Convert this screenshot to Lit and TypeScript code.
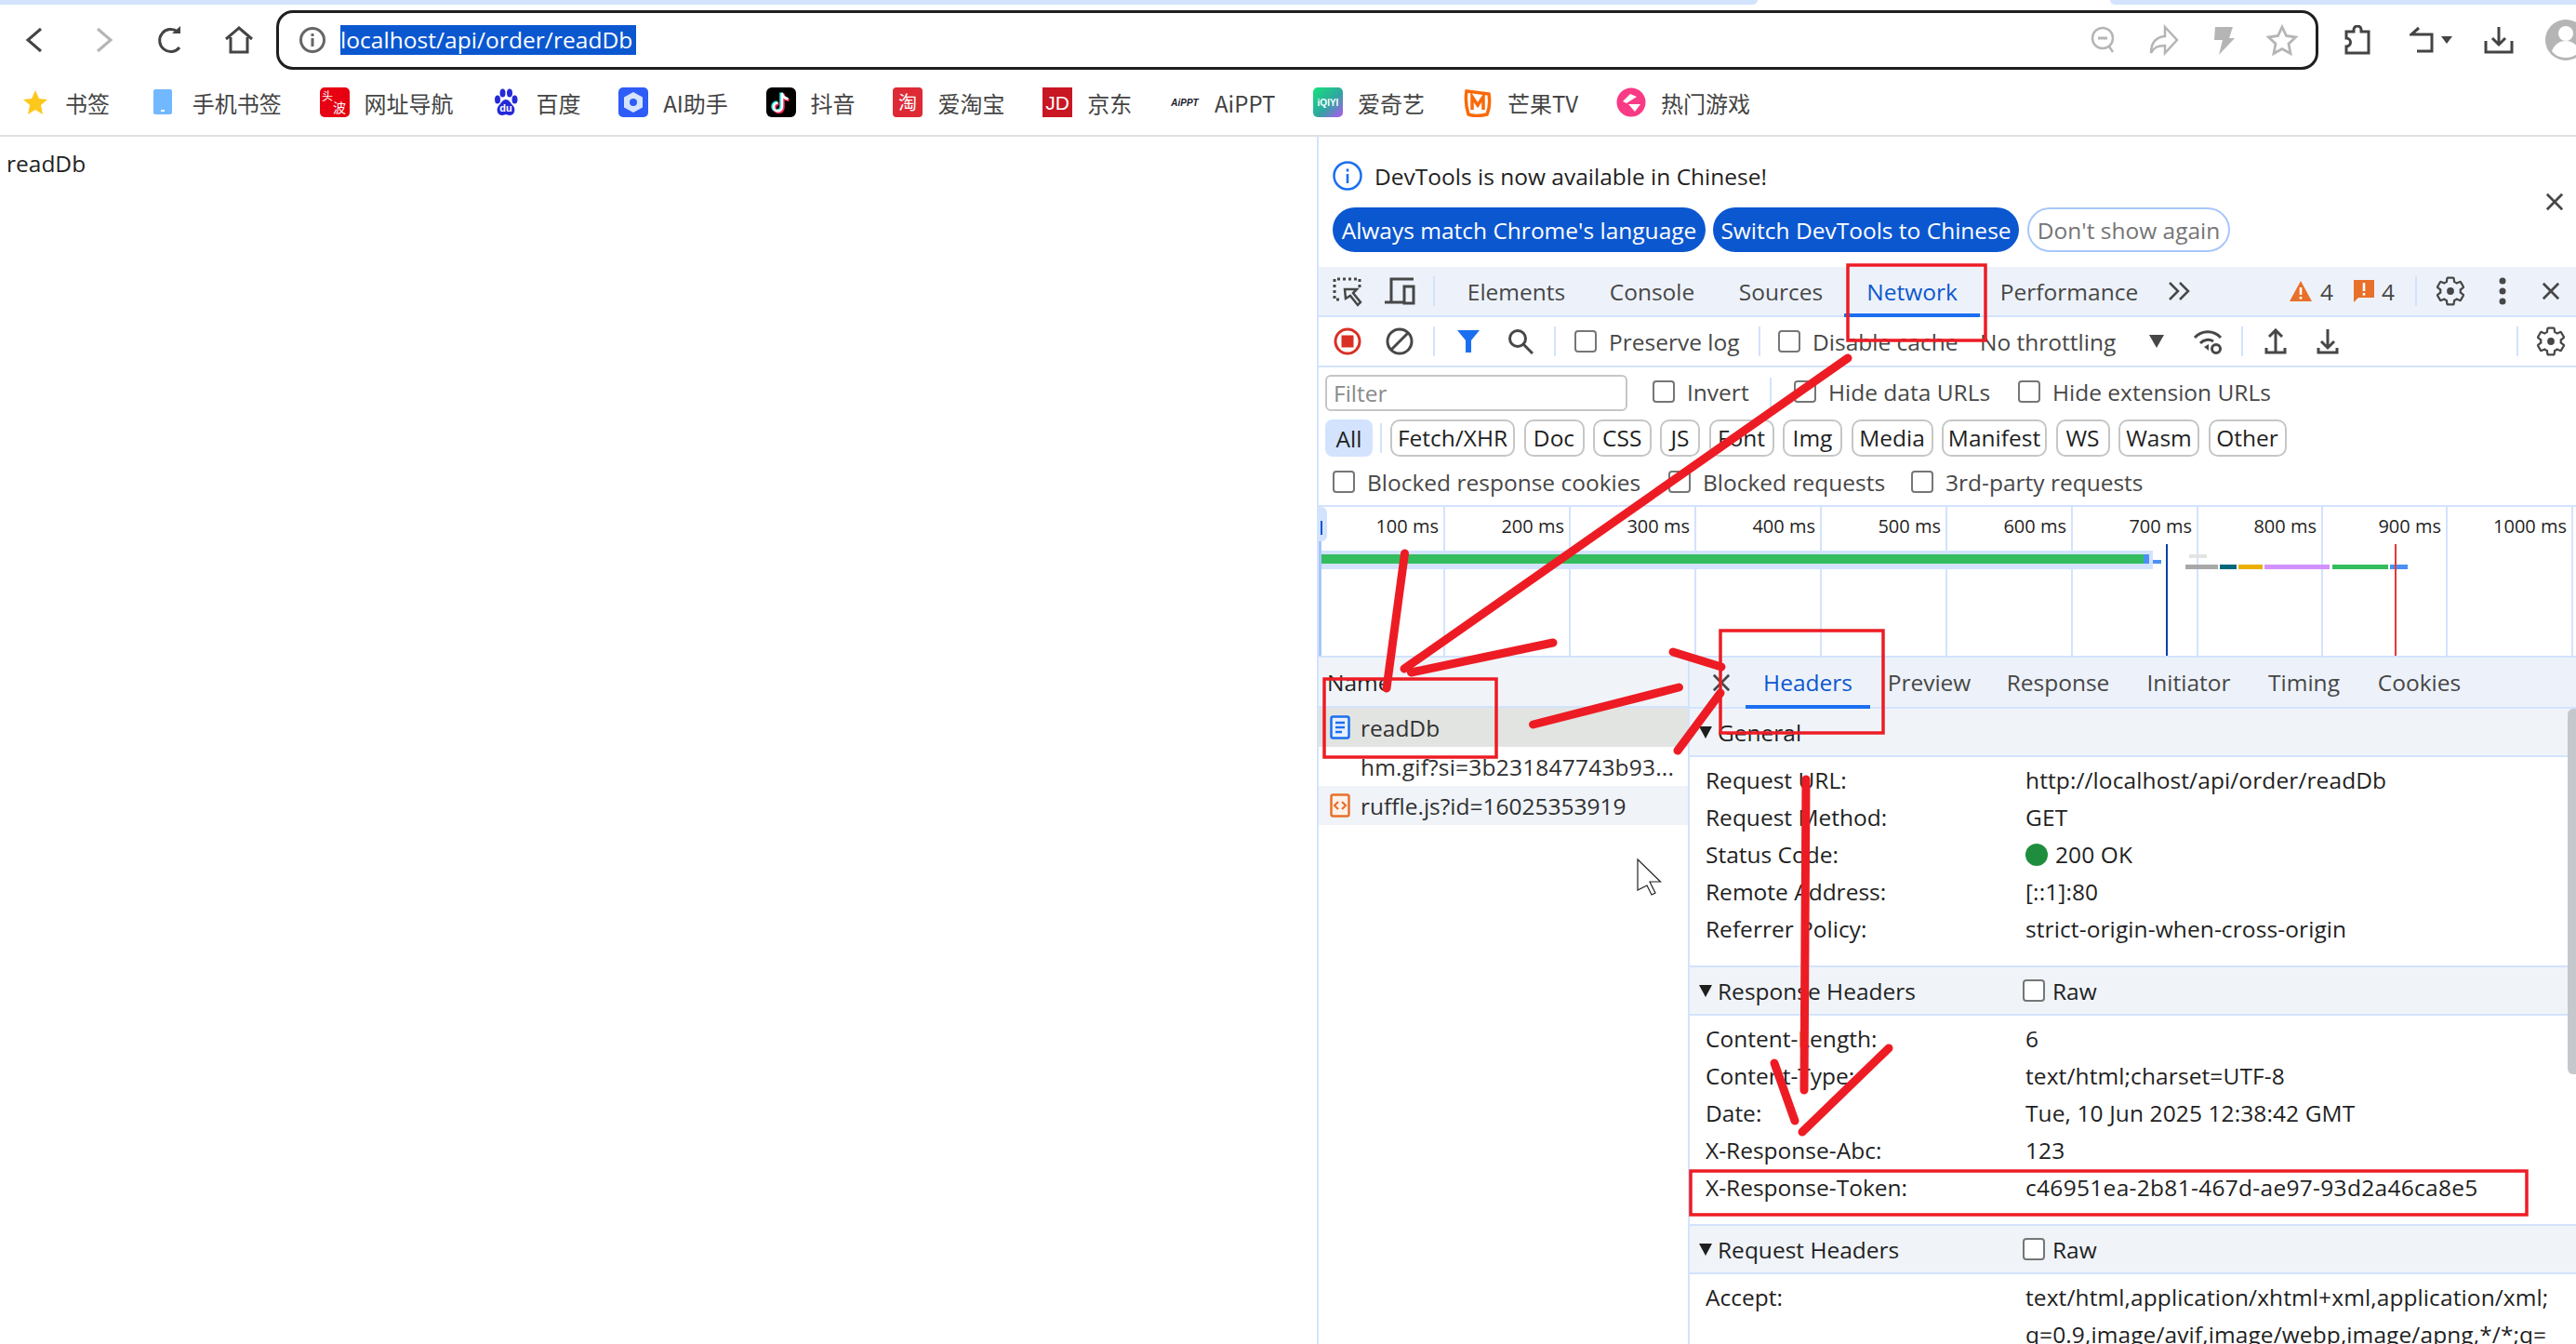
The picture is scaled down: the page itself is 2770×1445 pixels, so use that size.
import { LitElement, html, css } from "lit";
import { customElement } from "lit/decorators.js";

const GEAR_D = "M19.14 12.94c.04-.3.06-.61.06-.94 0-.32-.02-.64-.07-.94l2.03-1.58c.18-.14.23-.41.12-.61l-1.92-3.32c-.12-.22-.37-.29-.59-.22l-2.39.96c-.5-.38-1.03-.7-1.62-.94l-.36-2.54c-.04-.24-.24-.41-.48-.41h-3.84c-.24 0-.43.17-.47.41l-.36 2.54c-.59.24-1.13.57-1.62.94l-2.39-.96c-.22-.08-.47 0-.59.22L2.74 8.87c-.12.21-.08.47.12.61l2.03 1.58c-.05.3-.09.63-.09.94s.02.64.07.94l-2.03 1.58c-.18.14-.23.41-.12.61l1.92 3.32c.12.22.37.29.59.22l2.39-.96c.5.38 1.03.7 1.62.94l.36 2.54c.05.24.24.41.48.41h3.84c.24 0 .44-.17.47-.41l.36-2.54c.59-.24 1.13-.56 1.62-.94l2.39.96c.22.08.47 0 .59-.22l1.92-3.32c.12-.22.07-.47-.12-.61l-2.01-1.58z";

const gear = html`<svg class="i36" viewBox="0 0 24 24"><path d=${GEAR_D} fill="none" stroke="#474747" stroke-width="1.5"/><circle cx="12" cy="12" r="2.6" fill="#474747"/></svg>`;
const closeX = html`<svg class="i22" viewBox="0 0 22 22"><path d="M2 2 20 20M20 2 2 20" stroke="#474747" stroke-width="3" fill="none"/></svg>`;
const chk = html`<span class="chk"></span>`;

const bookmarks = [
  { label: "书签", icon: html`<svg class="bi" viewBox="0 0 32 32"><path d="M16 3l4 9 9 1-7 6 2 10-8-5-8 5 2-10-7-6 9-1z" fill="#fdc81e"/></svg>` },
  { label: "手机书签", icon: html`<svg class="bi" viewBox="0 0 32 32"><rect x="6" y="2" width="20" height="27" rx="2" fill="#71b8ff"/><rect x="14" y="24" width="4" height="2" fill="#fff"/></svg>` },
  { label: "网址导航", icon: html`<svg class="bi" viewBox="0 0 32 32"><rect width="32" height="32" rx="5" fill="#e60012"/><text x="2" y="14" font-size="12" fill="#fff" font-family="Noto Sans CJK SC">头</text><text x="14" y="27" font-size="14" fill="#fff" font-family="Noto Sans CJK SC">波</text></svg>` },
  { label: "百度", icon: html`<svg class="bi" viewBox="0 0 32 32"><g fill="#2529d8"><ellipse cx="7" cy="13" rx="3" ry="4.5"/><ellipse cx="12.500" cy="6" rx="3" ry="4.500"/><ellipse cx="20" cy="6" rx="3" ry="4.500"/><ellipse cx="25.500" cy="13" rx="3" ry="4.500"/><path d="M16 13c4 0 5 4 8 7 3 4 1 10-4 10-2 0-3-1-4-1s-2 1-4 1c-5 0-7-6-4-10 3-3 4-7 8-7z"/></g><text x="16" y="26" font-size="11" font-weight="700" fill="#fff" text-anchor="middle" font-family="Liberation Sans">du</text></svg>` },
  { label: "AI助手", icon: html`<svg class="bi" viewBox="0 0 32 32"><rect width="32" height="32" rx="5" fill="#2d5cf6"/><path d="M16 5l10 5.500v11L16 27 6 21.500v-11z" fill="#d6e3fe"/><circle cx="16" cy="16" r="4" fill="#2d5cf6"/></svg>` },
  { label: "抖音", icon: html`<svg class="bi" viewBox="0 0 32 32"><rect width="32" height="32" rx="6" fill="#000"/><path d="M17 6v15a4.500 4.500 0 1 1-4.500-4.500M17 6c.5 3.500 3 6 6.500 6.500" fill="none" stroke="#25f4ee" stroke-width="3.500" transform="translate(-1 -.5)"/><path d="M17 6v15a4.500 4.500 0 1 1-4.500-4.500M17 6c.5 3.500 3 6 6.500 6.500" fill="none" stroke="#fe2c55" stroke-width="3.500" transform="translate(1 1)"/><path d="M17 6v15a4.500 4.500 0 1 1-4.500-4.500M17 6c.5 3.500 3 6 6.500 6.500" fill="none" stroke="#fff" stroke-width="2.500"/></svg>` },
  { label: "爱淘宝", icon: html`<svg class="bi" viewBox="0 0 32 32"><rect width="32" height="32" rx="4" fill="#dd2a35"/><text x="16" y="24" font-size="20" fill="#fff" text-anchor="middle" font-family="Noto Sans CJK SC">淘</text></svg>` },
  { label: "京东", icon: html`<svg class="bi" viewBox="0 0 32 32"><rect width="32" height="32" fill="#c91623"/><text x="16" y="24" font-size="21" fill="#fff" text-anchor="middle" font-family="Liberation Sans">JD</text></svg>` },
  { label: "AiPPT", icon: html`<svg class="bi" viewBox="0 0 32 32"><text x="16" y="20" font-size="10" font-style="italic" font-weight="700" fill="#1a1a2e" text-anchor="middle" font-family="Liberation Sans">AiPPT</text></svg>` },
  { label: "爱奇艺", icon: html`<svg class="bi" viewBox="0 0 32 32"><defs><linearGradient id="iq" x1="0" y1="0" x2="1" y2="1"><stop offset="0" stop-color="#16e27c"/><stop offset=".55" stop-color="#2fa6a0"/><stop offset="1" stop-color="#b455f5"/></linearGradient></defs><rect width="32" height="32" rx="5" fill="url(#iq)"/><text x="16" y="20" font-size="10" font-weight="700" fill="#fff" text-anchor="middle" font-family="Liberation Sans">iQIYI</text></svg>` },
  { label: "芒果TV", icon: html`<svg class="bi" viewBox="0 0 32 32"><path d="M4 4 L28 7 Q30 20 26 29 Q14 32 6 29 Q2 16 4 4z" fill="none" stroke="#f96a0a" stroke-width="3.500"/><path d="M10 24V10l6 9 6-9v14" fill="none" stroke="#f96a0a" stroke-width="3.500"/></svg>` },
  { label: "热门游戏", icon: html`<svg class="bi" viewBox="0 0 32 32"><circle cx="16" cy="16" r="15.500" fill="#f93a85"/><path d="M15 7l7 3-11 7-4-2z" fill="#fff"/><path d="M13 18h13l-6 8z" fill="#fff"/></svg>` },
];

const tabs = [
  { t: "Elements", w: 151 },
  { t: "Console", w: 141 },
  { t: "Sources", w: 136 },
  { t: "Network", w: 146, on: true },
  { t: "Performance", w: 192 },
];
const chips = [
  { t: "Fetch/XHR", w: 134 }, { t: "Doc", w: 65 }, { t: "CSS", w: 62.5 }, { t: "JS", w: 43 },
  { t: "Font", w: 70 }, { t: "Img", w: 64 }, { t: "Media", w: 88 }, { t: "Manifest", w: 113 },
  { t: "WS", w: 58 }, { t: "Wasm", w: 87 }, { t: "Other", w: 84 },
];
const detailTabs = [
  { t: "Headers", w: 134, on: true }, { t: "Preview", w: 127 }, { t: "Response", w: 150 },
  { t: "Initiator", w: 131 }, { t: "Timing", w: 117 }, { t: "Cookies", w: 131 },
];
const rulerLines = [1552, 1687, 1822, 1957, 2092, 2227, 2362, 2496, 2630, 2765];
const rulerLabels = ["100 ms", "200 ms", "300 ms", "400 ms", "500 ms", "600 ms", "700 ms", "800 ms", "900 ms", "1000 ms"];
const segs: [number, number, number, number, string][] = [
  [1420, 2315, 592, 612, "#d3e3fd"],
  [1420, 2305, 596, 606, "#34bd5e"],
  [2305, 2311, 596, 606, "#4a90f5"],
  [2315, 2324, 602, 606, "#4a90f5"],
  [2354, 2373, 596, 600, "#e3e3e3"],
  [2350, 2385, 607, 612, "#a8a8a8"],
  [2387, 2405, 607, 612, "#00687a"],
  [2407, 2433, 607, 612, "#e9b000"],
  [2435, 2505, 607, 612, "#d291ff"],
  [2508, 2568, 607, 612, "#34bd5e"],
  [2570, 2589, 607, 612, "#4a90f5"],
  [1418, 1421, 582, 705, "#a8c7fa"],
  [2329, 2331, 585, 705, "#0b3ea8"],
  [2575, 2577, 585, 705, "#e53935"],
];

const general = [
  ["Request URL:", "http://localhost/api/order/readDb"],
  ["Request Method:", "GET"],
  ["Status Code:", "200 OK"],
  ["Remote Address:", "[::1]:80"],
  ["Referrer Policy:", "strict-origin-when-cross-origin"],
];
const response = [
  ["Content-Length:", "6"],
  ["Content-Type:", "text/html;charset=UTF-8"],
  ["Date:", "Tue, 10 Jun 2025 12:38:42 GMT"],
  ["X-Response-Abc:", "123"],
  ["X-Response-Token:", "c46951ea-2b81-467d-ae97-93d2a46ca8e5"],
];

@customElement("app-root")
export class AppRoot extends LitElement {
  static styles = css`
    :host { display: block; width: 2770px; height: 1445px; position: relative; overflow: hidden; background: #fff;
      font-family: "Open Sans", "Noto Sans CJK SC", sans-serif; font-size: 24.5px; color: #1f1f1f; }
    * { box-sizing: border-box; }
    svg { display: block; flex: none; }
    .i36 { width: 36px; height: 36px; }
    .i22 { width: 20px; height: 20px; }
    .strip { display: flex; height: 5px; }
    .strip-a { width: 1890px; background: #d3e3fd; border-bottom-right-radius: 6px; }
    .strip-b { margin-left: auto; width: 501px; background: #d3e3fd; border-bottom-left-radius: 6px; }
    .toolbar { display: grid; grid-template-columns: 74px 76px 66px 81px 2196px 84px 73px 74px 70px; height: 75px; align-items: center; justify-items: center; }
    .addr { width: 100%; height: 64px; border: 3px solid #1f1f1f; border-radius: 18px; display: flex; align-items: center; padding: 0 18px 0 21px; }
    .sel { margin-left: 15px; background: #0b57d0; color: #fff; height: 32px; line-height: 32px; width: 318px; white-space: nowrap; letter-spacing: 0.05px; }
    .addr-right { margin-left: auto; display: flex; gap: 28px; }
    .addr-right svg { width: 36px; height: 36px; }
    .undo { display: flex; align-items: center; gap: 6px; }
    .bookmarks { height: 67px; display: flex; align-items: center; gap: 40.8px; padding: 0 0 5px 22px; border-bottom: 2px solid #e0e0e0; font-family: "Noto Sans CJK SC", sans-serif; font-size: 24px; color: #444; }
    .bm { display: flex; align-items: center; gap: 16px; white-space: nowrap; }
    .bi { width: 32px; height: 32px; }
    .main { display: flex; height: 1298px; }
    .page { width: 1416px; padding: 13px 0 0 7px; line-height: 32px; }
    .dev { width: 1354px; border-left: 2px solid #d3e3fd; display: flex; flex-direction: column; overflow: hidden; }
    .info { height: 140px; display: flex; align-items: center; justify-content: space-between; padding: 0 13px 0 15px; flex: none; }
    .info-l { display: flex; flex-direction: column; gap: 18px; margin-top: 10px; }
    .info-t { display: flex; align-items: center; gap: 13px; height: 32px; }
    .info-b { display: flex; gap: 8px; }
    .pill { height: 48px; border-radius: 24px; display: flex; align-items: center; justify-content: center; white-space: nowrap; background: #0b57d0; color: #fff; }
    .pill.w1 { width: 401px; } .pill.w2 { width: 329px; }
    .pill.w3 { width: 218px; background: #fff; border: 2px solid #a8c7fa; color: #757575; margin-left: 1px; }
    .bar { display: flex; align-items: center; flex: none; white-space: nowrap; }
    .main-tabs { height: 54px; background: #edf2fa; border-bottom: 2px solid #d3e3fd; padding: 0 3px 0 3px; color: #474747; }
    .ib { width: 56px; height: 100%; display: flex; align-items: center; justify-content: center; flex: none; }
    .ib.wide { width: 57px; }
    .ib.gearbox { width: 54px; }
    .ib.last { width: 48px; }
    .tabs-gap { width: 5px; flex: none; }
    .sep { width: 2px; height: 32px; background: #d3e3fd; flex: none; margin: 0 7px 0 8px; }
    .sep.tight { margin: 0 8px 0 0; }
    .sep.push { margin: 0 8px 0 auto; }
    .sep.row3-sep { margin: 0 0 0 24px; }
    .sep.row4-sep { margin: 0 9px 0 8px; }
    .tab { height: 100%; display: flex; align-items: center; justify-content: center; flex: none; position: relative; }
    .tab.on { color: #0b57d0; }
    .tab.on::after { content: ""; position: absolute; left: 0; right: 0; bottom: -2px; height: 4px; background: #1a6ff0; }
    .more { width: 44px; }
    .issues { margin-left: auto; display: flex; align-items: center; }
    .issue { display: flex; align-items: center; gap: 8px; margin-right: 22px; }
    .row2 { height: 54px; border-bottom: 2px solid #d3e3fd; padding-left: 3px; color: #474747; }
    .row3 { height: 54px; padding-left: 7px; color: #474747; }
    .row3 .lab span { position: relative; top: -1px; }
    .row4 { height: 44px; padding-left: 7px; }
    .row5 { height: 50px; padding-left: 15px; color: #474747; }
    .throttle { margin-left: 25px; width: 148px; flex: none; }
    .throttle-tri { margin-left: 33px; }
    .wifi { margin-left: 18px; }
    .chk { width: 24px; height: 24px; border: 2px solid #747775; border-radius: 4px; background: #fff; flex: none; }
    .lab { display: flex; align-items: center; gap: 13px; flex: none; white-space: nowrap; }
    .lab.raw { gap: 8px; }
    .filter { width: 325px; height: 39px; border: 2px solid #c4c7c5; border-radius: 6px; padding-left: 7px; color: #8a8a8a; display: flex; align-items: center; flex: none; }
    .all { width: 51px; height: 40px; border-radius: 8px; background: #d3e3fd; display: flex; align-items: center; justify-content: center; flex: none; }
    .chips { display: flex; gap: 9.5px; }
    .chip { height: 40px; border: 2px solid #c4c7c5; border-radius: 10px; display: flex; align-items: center; justify-content: center; flex: none; padding-bottom: 1px; }
    .timeline { height: 164px; flex: none; position: relative; border-top: 2px solid #d3e3fd; border-bottom: 2px solid #d3e3fd; }
    .vline { position: absolute; top: 0; bottom: 0; width: 2px; background: #d3e3fd; }
    .tlabel { position: absolute; top: 7px; width: 110px; text-align: right; font-size: 20px; line-height: 28px; white-space: nowrap; }
    .seg { position: absolute; }
    .handle { position: absolute; left: 0; top: 0; width: 9px; height: 37px; background: #d3e3fd; border-radius: 0 6px 6px 0; }
    .handle::after { content: ""; position: absolute; left: 2px; top: 15px; width: 2px; height: 15px; background: #0b57d0; }
    .lower { flex: 1; display: flex; min-height: 0; }
    .list { width: 399px; flex: none; border-right: 2px solid #d3e3fd; }
    .list-h { height: 54px; background: #f0f4f9; border-bottom: 2px solid #d3e3fd; padding: 0 0 0 9px; display: flex; align-items: center; }
    .req { height: 42px; display: flex; align-items: center; gap: 12px; padding-left: 12px; white-space: nowrap; color: #303030; }
    .req span { position: relative; left: -1px; }
    .req.sel-row { background: #e2e4e1; }
    .req.alt { background: #f0f4f9; }
    .req.noicon { padding-left: 46px; letter-spacing: 0.2px; }
    .ri { width: 22px; height: 26px; }
    .detail { flex: 1; min-width: 0; display: flex; flex-direction: column; position: relative; }
    .detail-tabs { height: 55px; flex: none; background: #edf2fa; border-bottom: 2px solid #d3e3fd; color: #474747; padding-left: 13px; }
    .dx { width: 47px; height: 100%; display: flex; align-items: center; justify-content: center; flex: none; padding-right: 6px; }
    .sec { height: 54px; background: #f0f4f9; border-top: 2px solid #d3e3fd; border-bottom: 2px solid #d3e3fd; display: flex; align-items: center; padding-left: 10px; flex: none; }
    .sec.first { height: 52px; border-top: 0; }
    .sec-name { width: 348px; display: flex; align-items: center; gap: 6px; flex: none; white-space: nowrap; }
    .tri { width: 0; height: 0; border-left: 7px solid transparent; border-right: 7px solid transparent; border-top: 13px solid #1f1f1f; }
    .rows { padding: 5px 0 19px 17px; flex: none; }
    .kv { display: grid; grid-template-columns: 344px 1fr; min-height: 40px; align-items: start; line-height: 40px; }
    .kv div:first-child { white-space: nowrap; }
    .val { white-space: nowrap; letter-spacing: 0.1px; }
    .val.token { letter-spacing: 0.3px; }
    .status { display: flex; align-items: center; gap: 8px; }
    .dot { width: 24px; height: 24px; border-radius: 50%; background: #1e8e3e; flex: none; }
    .scroll { position: absolute; right: 0; top: 55px; width: 9px; height: 393px; background: #c4c7cc; border-radius: 6px 0 0 6px; }
    .overlay { position: absolute; left: 0; top: 0; width: 2770px; height: 1445px; pointer-events: none; }
  `;

  private cb(text: string, w: number, ml: number) {
    return html`<label class="lab" style="width:${w}px;margin-left:${ml}px">${chk}<span>${text}</span></label>`;
  }

  render() {
    const t0 = 1418;
    return html`
      <div class="strip"><div class="strip-a"></div><div class="strip-b"></div></div>
      <div class="toolbar">
        <svg width="20" height="28" viewBox="0 0 20 28"><path d="M17 2 3 14l14 12" fill="none" stroke="#444" stroke-width="3"/></svg>
        <svg width="20" height="28" viewBox="0 0 20 28"><path d="M3 2l14 12L3 26" fill="none" stroke="#b5b5b5" stroke-width="3"/></svg>
        <svg width="28" height="30" viewBox="0 0 28 30"><path d="M22 6A12 12 0 1 0 24 23" fill="none" stroke="#444" stroke-width="3"/><path d="M16 8h9V0z" fill="#444"/></svg>
        <svg width="32" height="30" viewBox="0 0 32 30"><path d="M2 14 16 2l14 12M7 12v16h18V12" fill="none" stroke="#444" stroke-width="3"/></svg>
        <div class="addr">
          <svg width="30" height="30" viewBox="0 0 30 30"><circle cx="15" cy="15" r="12.500" fill="none" stroke="#666" stroke-width="3"/><rect x="13.500" y="13" width="3" height="9" fill="#666"/><rect x="13.500" y="8" width="3" height="3" fill="#666"/></svg>
          <div class="sel">localhost/api/order/readDb</div>
          <div class="addr-right">
            <svg viewBox="0 0 36 36"><circle cx="17" cy="16" r="11" fill="none" stroke="#b5b5b5" stroke-width="2.500"/><path d="M12 16h10" stroke="#b5b5b5" stroke-width="3"/><path d="M24 25l4 6" stroke="#b5b5b5" stroke-width="2.500"/></svg>
            <svg viewBox="0 0 36 36"><path d="M20 4l13 14-13 14v-8c-8 0-12 2-15 8 0-10 4-17 15-18z" fill="none" stroke="#b5b5b5" stroke-width="2.500"/></svg>
            <svg viewBox="0 0 36 36"><path d="M10 4h19l-4 12h6L14 34l4-16H9z" fill="#b5b5b5"/></svg>
            <svg viewBox="0 0 36 36"><path d="M18 4l4.500 9.500 10 1.500-7.500 7 2 10.500-9-5-9 5 2-10.500-7.500-7 10-1.500z" fill="none" stroke="#b5b5b5" stroke-width="2.800"/></svg>
          </div>
        </div>
        <svg width="30" height="32" viewBox="0 0 30 32"><path d="M3 7h8V5a4 4 0 0 1 8 0v2h8v23H3v-7a4 4 0 0 0 0-9z" fill="none" stroke="#444" stroke-width="3"/></svg>
        <div class="undo">
          <svg width="28" height="30" viewBox="0 0 28 30"><path d="M10 2 2 9h22v18H8" fill="none" stroke="#444" stroke-width="3"/></svg>
          <svg width="12" height="8" viewBox="0 0 12 8"><path d="M0 0h12L6 8z" fill="#444"/></svg>
        </div>
        <svg width="32" height="30" viewBox="0 0 32 30"><path d="M16 1v19M9 13l7 7 7-7M2 16v12h28V16" fill="none" stroke="#444" stroke-width="3"/></svg>
        <svg width="44" height="44" viewBox="0 0 44 44"><circle cx="22" cy="22" r="22" fill="#b5b5b5"/><circle cx="22" cy="15" r="8" fill="#fff"/><path d="M7 34c3-8 9-11 15-11s12 3 15 11c-4 5-9 7-15 7S11 39 7 34z" fill="#fff"/></svg>
      </div>
      <div class="bookmarks">
        ${bookmarks.map((b) => html`<div class="bm">${b.icon}<span>${b.label}</span></div>`)}
      </div>
      <div class="main">
        <div class="page">readDb</div>
        <div class="dev">
          <div class="info">
            <div class="info-l">
              <div class="info-t">
                <svg width="32" height="32" viewBox="0 0 32 32"><circle cx="16" cy="16" r="14.500" fill="none" stroke="#1a6ff0" stroke-width="2.500"/><rect x="14.700" y="14" width="2.600" height="10" fill="#1a6ff0"/><rect x="14.700" y="8.500" width="2.600" height="3" fill="#1a6ff0"/></svg>
                <span>DevTools is now available in Chinese!</span>
              </div>
              <div class="info-b">
                <div class="pill w1">Always match Chrome's language</div>
                <div class="pill w2">Switch DevTools to Chinese</div>
                <div class="pill w3">Don't show again</div>
              </div>
            </div>
            ${closeX}
          </div>
          <div class="bar main-tabs">
            <div class="ib"><svg width="36" height="34" viewBox="0 0 36 34"><path d="M9 26H4V4h27v9" fill="none" stroke="#474747" stroke-width="3" stroke-dasharray="3 3"/><path d="M15 15h13l-4 4 8 10-3 3-8-10-5 3z" fill="none" stroke="#474747" stroke-width="2.500"/></svg></div>
            <div class="ib"><svg width="34" height="32" viewBox="0 0 34 32"><path d="M8 27V3h24M1 28h20" fill="none" stroke="#474747" stroke-width="3"/><rect x="22" y="11" width="10" height="18" fill="none" stroke="#474747" stroke-width="3"/></svg></div>
            <div class="sep"></div>
            <div class="tabs-gap"></div>
            ${tabs.map((t) => html`<div class="tab ${t.on ? "on" : ""}" style="width:${t.w}px">${t.t}</div>`)}
            <div class="ib more"><svg width="26" height="22" viewBox="0 0 26 22"><path d="M3 2l9 9-9 9M14 2l9 9-9 9" fill="none" stroke="#474747" stroke-width="2.500"/></svg></div>
            <div class="issues">
              <div class="issue">
                <svg width="26" height="24" viewBox="0 0 26 24"><path d="M13 1 25 23H1z" fill="#e8702a"/><rect x="11.700" y="8" width="2.600" height="8" fill="#fff"/><rect x="11.700" y="18" width="2.600" height="2.600" fill="#fff"/></svg>
                <span>4</span>
              </div>
              <div class="issue">
                <svg width="22" height="26" viewBox="0 0 22 26"><path d="M0 1h22v19H5l-5 5z" fill="#e8702a"/><rect x="9.700" y="4" width="2.600" height="9" fill="#fff"/><rect x="9.700" y="15" width="2.600" height="2.600" fill="#fff"/></svg>
                <span>4</span>
              </div>
            </div>
            <div class="sep tight"></div>
            <div class="ib">${gear}</div>
            <div class="ib"><svg width="8" height="32" viewBox="0 0 8 32"><circle cx="4" cy="5" r="3.500" fill="#474747"/><circle cx="4" cy="16" r="3.500" fill="#474747"/><circle cx="4" cy="27" r="3.500" fill="#474747"/></svg></div>
            <div class="ib last">${closeX}</div>
          </div>
          <div class="bar row2">
            <div class="ib"><svg width="30" height="30" viewBox="0 0 30 30"><circle cx="15" cy="15" r="13" fill="none" stroke="#d93025" stroke-width="3"/><rect x="8.500" y="8.500" width="13" height="13" fill="#d93025"/></svg></div>
            <div class="ib"><svg width="30" height="30" viewBox="0 0 30 30"><circle cx="15" cy="15" r="13" fill="none" stroke="#474747" stroke-width="3"/><path d="M24 6 6 24" stroke="#474747" stroke-width="3"/></svg></div>
            <div class="sep"></div>
            <div class="ib wide"><svg width="26" height="26" viewBox="0 0 26 26"><path d="M1 1h24l-9 11v13h-6V12z" fill="#1a6ff0"/></svg></div>
            <div class="ib"><svg width="28" height="28" viewBox="0 0 28 28"><circle cx="11" cy="11" r="8.500" fill="none" stroke="#474747" stroke-width="3"/><path d="M17 17l10 10" stroke="#474747" stroke-width="3"/></svg></div>
            <div class="sep"></div>
            ${this.cb("Preserve log", 190, 13)}
            <div class="sep"></div>
            ${this.cb("Disable cache", 192, 12)}
            <span class="throttle">No throttling</span>
            <svg class="throttle-tri" width="18" height="14" viewBox="0 0 18 14"><path d="M1 0h16L9 14z" fill="#474747"/></svg>
            <div class="ib wifi"><svg width="34" height="30" viewBox="0 0 34 30"><path d="M3 11a19 19 0 0 1 28 0M9 17a11 11 0 0 1 14-2" fill="none" stroke="#474747" stroke-width="3"/><path d="M13 21l5-3v7z" fill="#474747"/><circle cx="26" cy="23" r="4.500" fill="none" stroke="#474747" stroke-width="3"/></svg></div>
            <div class="sep"></div>
            <div class="ib"><svg width="24" height="28" viewBox="0 0 24 28"><path d="M12 25V2M5 9l7-7 7 7M2 21v5h20v-5" fill="none" stroke="#474747" stroke-width="3"/></svg></div>
            <div class="ib"><svg width="24" height="28" viewBox="0 0 24 28"><path d="M12 1v20M5 14l7 7 7-7M2 21v5h20v-5" fill="none" stroke="#474747" stroke-width="3"/></svg></div>
            <div class="sep push"></div>
            <div class="ib gearbox">${gear}</div>
          </div>
          <div class="bar row3">
            <div class="filter">Filter</div>
            ${this.cb("Invert", 102, 27)}
            <div class="sep row3-sep"></div>
            ${this.cb("Hide data URLs", 210, 24)}
            ${this.cb("Hide extension URLs", 270, 31)}
          </div>
          <div class="bar row4">
            <div class="all">All</div>
            <div class="sep row4-sep"></div>
            <div class="chips">${chips.map((c) => html`<div class="chip" style="width:${c.w}px">${c.t}</div>`)}</div>
          </div>
          <div class="bar row5">
            ${this.cb("Blocked response cookies", 330, 0)}
            ${this.cb("Blocked requests", 230, 31)}
            ${this.cb("3rd-party requests", 247, 31)}
          </div>
          <div class="timeline">
            ${rulerLines.map((x) => html`<div class="vline" style="left:${x - t0}px"></div>`)}
            ${rulerLabels.map((l, i) => html`<div class="tlabel" style="left:${rulerLines[i] - t0 - 115}px">${l}</div>`)}
            <div class="handle"></div>
            ${segs.map((s) => html`<div class="seg" style="left:${s[0] - t0}px;width:${s[1] - s[0]}px;top:${s[2] - 545}px;height:${s[3] - s[2]}px;background:${s[4]}"></div>`)}
          </div>
          <div class="lower">
            <div class="list">
              <div class="list-h">Name</div>
              <div class="req sel-row">
                <svg class="ri" viewBox="0 0 22 26"><rect x="1.500" y="1.500" width="19" height="23" rx="2" fill="#e8f0fe" stroke="#1a6ff0" stroke-width="2.500"/><path d="M6 8h10M6 13h10M6 18h7" stroke="#1a6ff0" stroke-width="2.500"/></svg>
                <span>readDb</span>
              </div>
              <div class="req noicon"><span>hm.gif?si=3b231847743b93...</span></div>
              <div class="req alt">
                <svg class="ri" viewBox="0 0 22 26"><rect x="1.500" y="1.500" width="19" height="23" rx="2" fill="#fdf1ea" stroke="#e8702a" stroke-width="2.500"/><path d="M9 9l-4 4 4 4M13 9l4 4-4 4" fill="none" stroke="#e8702a" stroke-width="2.200"/></svg>
                <span>ruffle.js?id=16025353919</span>
              </div>
            </div>
            <div class="detail">
              <div class="bar detail-tabs">
                <div class="dx">${closeX}</div>
                ${detailTabs.map((t) => html`<div class="tab ${t.on ? "on" : ""}" style="width:${t.w}px">${t.t}</div>`)}
              </div>
              <div class="sec first"><div class="sec-name"><span class="tri"></span>General</div></div>
              <div class="rows">
                ${general.map(([k, v]) => html`<div class="kv"><div>${k}</div><div class="val">${k === "Status Code:" ? html`<div class="status"><span class="dot"></span>${v}</div>` : v}</div></div>`)}
              </div>
              <div class="sec"><div class="sec-name"><span class="tri"></span>Response Headers</div><label class="lab raw">${chk}Raw</label></div>
              <div class="rows">
                ${response.map(([k, v]) => html`<div class="kv"><div>${k}</div><div class="val ${k === "X-Response-Token:" ? "token" : ""}">${v}</div></div>`)}
              </div>
              <div class="sec"><div class="sec-name"><span class="tri"></span>Request Headers</div><label class="lab raw">${chk}Raw</label></div>
              <div class="rows">
                <div class="kv"><div>Accept:</div><div class="val">text/html,application/xhtml+xml,application/xml;<br />q=0.9,image/avif,image/webp,image/apng,*/*;q=</div></div>
              </div>
              <div class="scroll"></div>
            </div>
          </div>
        </div>
      </div>
      <svg class="overlay" viewBox="0 0 2770 1445">
        <g fill="none" stroke="#ed1c24" stroke-width="3.500">
          <rect x="1987" y="285" width="148" height="81"/>
          <rect x="1424" y="730" width="185" height="84"/>
          <rect x="1850" y="678" width="175" height="110"/>
          <rect x="1818" y="1259" width="899" height="47"/>
        </g>
        <g fill="none" stroke="#ed1c24" stroke-width="9" stroke-linecap="round">
          <path d="M1987 385 1510 719"/>
          <path d="M1510.500 595 1491 740"/>
          <path d="M1670 691 1517.500 723"/>
          <path d="M1799 701 1851 717"/>
          <path d="M1648.500 779 1805.500 739"/>
          <path d="M1804 807 1850 745"/>
          <path d="M1942 838 1940 1172"/>
          <path d="M1908 1143 1930 1205"/>
          <path d="M2031 1127 1938 1217"/>
        </g>
        <path d="M1761 924V957L1771 952 1776 962 1780 960 1774 948H1785.500z" fill="#fff" stroke="#222" stroke-width="1.200"/>
      </svg>
    `;
  }
}
